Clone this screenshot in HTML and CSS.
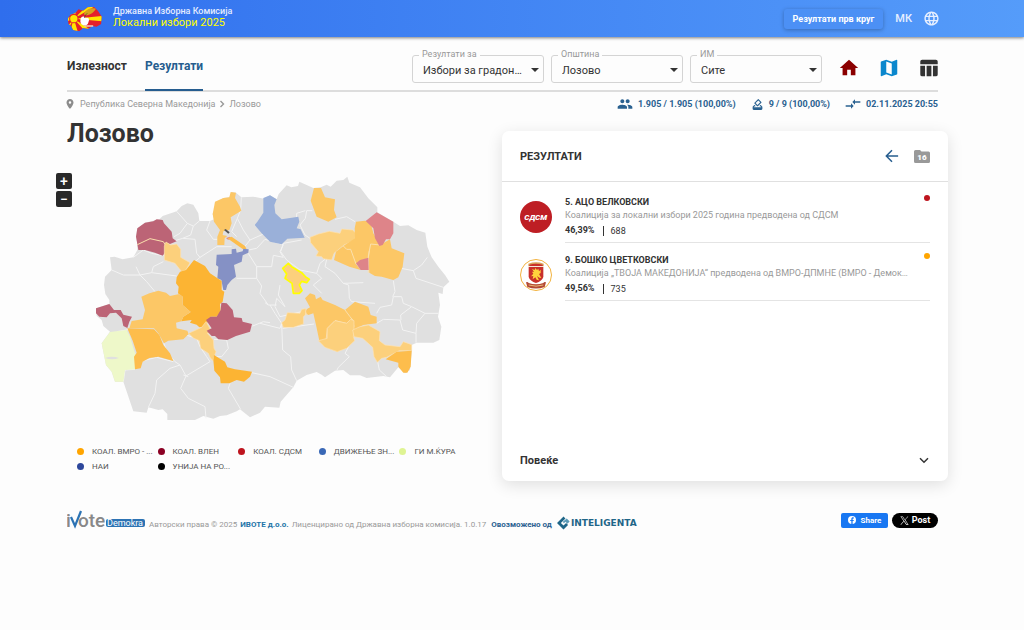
FILE: index.html
```html
<!DOCTYPE html>
<html lang="mk">
<head>
<meta charset="utf-8">
<meta name="viewport" content="width=device-width, initial-scale=1">
<title>Локални избори 2025</title>
<link rel="stylesheet" href="styles.css">
</head>
<body>
<header class="topbar">
  <a class="brand" href="#">
    <svg class="brand-logo" viewBox="0 0 104 78" aria-hidden="true">
      <defs><clipPath id="country"><path d="M2 38 10 26 24 22 34 10 48 14 62 4 80 2 92 14 104 32 102 54 88 62 76 60 64 68 48 66 36 76 18 72 12 60 4 54Z"/></clipPath></defs>
      <g clip-path="url(#country)">
        <path fill="#e5202b" d="M0 0h104v78H0z"/>
        <path fill="#ffe600" d="M20 38 0 30v16zM20 38 10 0h22zM20 38 8 78h24zM20 38 60 0h24zM20 38 104 30v16zM20 38 56 78h24zM20 38 0 4v12zM20 38 0 62v12z"/>
        <circle cx="20" cy="38" r="14" fill="#e5202b"/><circle cx="20" cy="38" r="11" fill="#ffe600"/>
      </g>
      <path fill="#d8a21c" d="M50 24C56 8 72 4 86 8 78 22 66 28 54 28z"/>
      <path fill="#fff" d="M40 40c2-12 12-10 16-4 8-4 12 4 8 12-2 10-10 12-16 10-6-2-10-8-8-18z"/>
      <path stroke="#f6e9cf" stroke-width="4" d="M52 60h26"/>
      <path stroke="#333" stroke-width="2" d="M52 36c0-6 4-10 8-14" fill="none"/>
    </svg>
    <span class="brand-text">
      <span class="brand-org">Државна Изборна Комисија</span>
      <span class="brand-name">Локални избори 2025</span>
    </span>
  </a>
  <div class="topbar-actions">
    <button class="round-button" type="button">Резултати прв круг</button>
    <button class="lang-button" type="button">МК
      <svg class="globe" viewBox="0 0 24 24" aria-hidden="true"><path fill="currentColor" d="M11.99 2C6.47 2 2 6.48 2 12s4.47 10 9.99 10C17.52 22 22 17.52 22 12S17.52 2 11.99 2zm6.93 6h-2.95c-.32-1.25-.78-2.45-1.38-3.56 1.84.63 3.37 1.91 4.33 3.56zM12 4.04c.83 1.2 1.48 2.53 1.91 3.96h-3.82c.43-1.43 1.08-2.76 1.91-3.96zM4.26 14C4.1 13.36 4 12.69 4 12s.1-1.36.26-2h3.38c-.08.66-.14 1.32-.14 2s.06 1.34.14 2H4.26zm.82 2h2.95c.32 1.25.78 2.45 1.38 3.56-1.84-.63-3.37-1.9-4.33-3.56zm2.95-8H5.08c.96-1.66 2.49-2.93 4.33-3.56C8.81 5.55 8.35 6.75 8.03 8zM12 19.96c-.83-1.2-1.48-2.53-1.91-3.96h3.82c-.43 1.43-1.08 2.76-1.91 3.96zM14.34 14H9.66c-.09-.66-.16-1.32-.16-2s.07-1.35.16-2h4.68c.09.65.16 1.32.16 2s-.07 1.34-.16 2zm.25 5.56c.6-1.11 1.06-2.31 1.38-3.56h2.95c-.96 1.65-2.49 2.93-4.33 3.56zM16.36 14c.08-.66.14-1.32.14-2s-.06-1.34-.14-2h3.38c.16.64.26 1.31.26 2s-.1 1.36-.26 2h-3.38z"/></svg>
    </button>
  </div>
</header>

<div class="page">
  <div class="toolbar">
    <nav class="tabs">
      <a class="tab" href="#turnout">Излезност</a>
      <a class="tab tab-active" href="#results">Резултати</a>
    </nav>
    <div class="filters">
      <div class="field"><label class="field-label" for="type">Резултати за</label><select class="field-select" id="type"><option>Избори за градоначалник</option></select></div>
      <div class="field"><label class="field-label" for="municipality">Општина</label><select class="field-select" id="municipality"><option>Лозово</option></select></div>
      <div class="field"><label class="field-label" for="station">ИМ</label><select class="field-select" id="station"><option>Сите</option></select></div>
    </div>
    <div class="views">
      <button class="view view-home" type="button" aria-label="Почетна"><svg viewBox="0 0 24 24"><path fill="currentColor" d="M10 20v-6h4v6h5v-8h3L12 3 2 12h3v8z"/></svg></button>
      <button class="view view-map" type="button" aria-label="Мапа"><svg viewBox="0 0 24 24"><path fill="currentColor" d="m20.5 3-.16.03L15 5.1 9 3 3.36 4.9c-.21.07-.36.25-.36.48V20.5c0 .28.22.5.5.5l.16-.03L9 18.9l6 2.1 5.64-1.9c.21-.07.36-.25.36-.48V3.500c0-.28-.22-.5-.5-.5zM15 19l-6-2.110V5l6 2.110V19z"/></svg></button>
      <button class="view view-table" type="button" aria-label="Табела"><svg viewBox="0 0 24 24"><path fill="currentColor" d="M2.500 9.500h5.200V21H4.500a2 2 0 0 1-2-2zM9.400 9.500h5.200V21H9.400zM16.300 9.500h5.200V19a2 2 0 0 1-2 2h-3.200zM4.500 3h15a2 2 0 0 1 2 2v3h-19V5a2 2 0 0 1 2-2z"/></svg></button>
    </div>
  </div>

  <div class="infobar">
    <nav class="crumbs" aria-label="Патека">
      <svg class="pin" viewBox="0 0 24 24" aria-hidden="true"><path fill="currentColor" d="M12 2C8.130 2 5 5.130 5 9c0 5.250 7 13 7 13s7-7.750 7-13c0-3.870-3.130-7-7-7zm0 9.500a2.500 2.500 0 1 1 0-5 2.500 2.500 0 0 1 0 5z"/></svg>
      <a class="crumb" href="#">Република Северна Македонија</a>
      <svg class="crumb-arrow" viewBox="0 0 6 8" aria-hidden="true"><path d="m1.500 1 3 3-3 3" fill="none" stroke="currentColor" stroke-width="1.400"/></svg>
      <a class="crumb" href="#">Лозово</a>
    </nav>
    <div class="stats">
      <span class="stat"><svg class="stat-icon stat-people" viewBox="0 0 24 24" aria-hidden="true"><path fill="currentColor" d="M16 11c1.660 0 2.990-1.340 2.990-3S17.660 5 16 5s-3 1.340-3 3 1.340 3 3 3zm-8 0c1.660 0 2.990-1.340 2.990-3S9.660 5 8 5 5 6.340 5 8s1.340 3 3 3zm0 2c-2.330 0-7 1.170-7 3.500V19h14v-2.500C15 14.170 10.330 13 8 13zm8 0c-.29 0-.62.02-.97.05 1.160.84 1.970 1.970 1.970 3.450V19h6v-2.500c0-2.330-4.670-3.500-7-3.500z"/></svg>1.905 / 1.905 (100,00%)</span>
      <span class="stat"><svg class="stat-icon" viewBox="0 0 24 24" aria-hidden="true"><path fill="currentColor" d="M18 13h-.68l-2 2h1.910L19 17H5l1.780-2h2.050l-2-2H6l-3 3v4c0 1.100.89 2 1.990 2H19a2 2 0 0 0 2-2v-4l-3-3zm-1-5.050-4.950 4.950-3.540-3.540 4.950-4.950L17 7.950zm-4.240-5.660L6.390 8.660a1 1 0 0 0 0 1.410l4.950 4.950c.39.39 1.020.39 1.410 0l6.360-6.360a1 1 0 0 0 0-1.410L14.160 2.300a.98.98 0 0 0-1.400-.01z"/></svg>9 / 9 (100,00%)</span>
      <span class="stat"><svg class="stat-icon stat-sync" viewBox="0 0 24 24" aria-hidden="true"><path fill="currentColor" d="M9.010 14H1v2h8.010v3L13 15l-3.990-4v3zm5.980-1v-3H23V8h-8.010V5L11 9l3.990 4z"/></svg>02.11.2025 20:55</span>
    </div>
  </div>

  <main class="content">
    <section class="map-panel">
      <h1 class="title">Лозово</h1>
      <div class="map-box">
        <div class="zoom">
          <button class="zoom-button" type="button">+</button>
          <button class="zoom-button" type="button">−</button>
        </div>
        <svg class="map" viewBox="0 0 1140 780" role="img" aria-label="Мапа на општини">
          <path class="land" d="M90 262 104 260 128 268 160 262 172 240 172 222 168 200 172 175 195 158 238 148 248 138 290 124 305 108 322 100 340 104 355 130 358 153 390 153 402 148 398 132 412 95 430 84 448 82 455 66 468 68 484 82 520 80 552 86 570 76 590 88 596 72 620 46 634 52 654 48 658 35 700 54 722 52 740 44 752 50 770 32 790 30 802 20 808 38 840 52 865 85 892 112 892 127 940 155 960 168 985 166 1010 180 1036 188 1042 230 1055 262 1075 290 1095 315 1108 335 1090 352 1088 372 1075 368 1080 405 1074 440 1084 470 1078 510 1060 518 1010 518 995 525 995 545 990 600 975 610 955 592 930 622 910 618 860 624 840 616 810 616 790 600 765 602 735 622 725 614 710 606 680 615 650 632 640 652 602 695 598 713 555 710 540 728 510 742 480 718 470 724 440 736 420 738 400 746 370 738 345 750 262 750 262 732 248 718 235 720 205 712 200 728 160 724 130 635 105 635 95 605 78 585 65 520 90 485 70 468 65 450 50 438 48 415 88 402 88 390 76 372 72 345 75 320 95 300Z"/>
          <g class="borders">
            <path d="M290 124 322 160 300 190 282 200M322 160 340 168 358 153M340 168 332 195 308 205 285 212M308 205 345 208 350 250 360 262 345 275M360 262 410 230 455 230M390 153 380 180 400 208 412 208M160 262 190 240 215 250 250 257M95 300 130 315 180 315 215 308 290 318M180 315 200 335 225 365M215 308 220 290 250 275M168 290 180 315M484 82 482 120 472 145 490 180 510 210 555 190 524 165M472 145 455 185 470 200M510 210 490 235M555 208 530 235 505 240M555 208 610 224 600 245 610 262 580 256 575 290 530 290 505 250M530 290 530 325 470 325M530 325 545 348 540 370 565 405 590 405M565 405 555 398"/>
            <path d="M676 145 660 165 675 195 690 205M676 145 680 122 697 122M676 122 650 130 650 145M765 148 800 140 825 155M602 245 610 220 665 210M602 245 620 270 660 300 710 310 720 280 735 268M740 268 735 290 765 310 790 340 850 338M710 310 725 325 700 345 725 370M790 340 806 345 808 385M963 295 1000 302 1025 285 1042 262M1000 302 1008 325 1090 352M940 332 945 365 938 380M600 345 595 375 615 410 590 385M590 385 585 410 600 440 665 425"/>
            <path d="M570 405 585 430 605 460 600 475 540 460M605 460 608 540 632 560 635 600 650 632M608 475 702 462M805 532 795 550 808 560 775 592 770 602M893 575 898 600 920 620M890 460 910 448 960 450 968 480 1008 490 1008 518M890 430 900 412 935 405 940 380 965 380 970 400 995 410 962 435 963 450M995 410 1035 430 1075 430M1035 430 1010 460 1008 490M808 385 815 395 885 400"/>
            <path d="M430 462 518 468 550 455 570 458M402 508 440 510 445 535 425 560 402 560M252 520 260 545 285 575 300 585 318 618 390 575M318 495 350 505 360 530 380 560 390 575M300 585 270 595 230 630 225 670 205 712M318 618 302 655 325 685 375 710 378 745M310 615 325 620M165 598 190 572 230 562 280 575M515 608 570 620 640 652M450 640 445 655 482 718M110 485 150 478M130 635 135 600 165 598"/>
          </g>
          <path class="c-vlen" d="M168 200 172 175 195 158 220 154 230 148 248 150 252 160 275 185 278 205 290 214 270 222 260 220 265 235 248 257 225 248 195 240 175 240 172 222Z"/>
          <path class="line" d="M172 224 210 206 250 215 256 225"/>
          <path class="c-y2" d="M405 95 430 84 448 82 452 66 468 68 465 84 480 110 484 122 452 142 455 160 448 180 430 184 428 195 442 198 434 205 433 225 412 225 412 200 420 180 402 155 398 132Z"/>
          <path class="c-y1" d="M253 228 258 216 272 225 290 222 302 238 302 262 330 278 318 300 305 305 285 280 253 270Z"/>
          <path class="c-black" d="m432 180 5-3 12 10-4 4z"/><path class="c-sdsm" d="m438 204 12-4 4 6-10 3z"/>
          <path class="c-y3" d="M442 205 455 200 495 228 500 238 488 237Z"/>
          <path class="c-nai" d="M410 254 455 252 455 238 468 236 470 248 488 244 490 236 506 238 505 248 488 256 485 275 462 285 468 320 455 330 442 345 438 360 430 360 424 330 412 325 415 290 408 285Z"/>
          <path class="c-top" d="M290 322 300 305 318 300 342 270 375 288 390 310 425 333 425 360 433 365 428 395 420 402 422 425 410 440 392 440 375 470 358 472 350 464 330 458 335 450 304 454 310 440 332 426 308 405 308 380 294 370 296 350 288 340Z"/>
          <path class="c-y2" d="M184 380 208 370 235 362 258 368 270 378 298 372 308 380 308 405 332 426 310 440 304 454 288 458 290 475 322 482 326 492 310 508 265 512 252 520 235 490 222 475 148 475 155 453 188 448 195 420Z"/>
          <path class="c-vlen" d="M48 415 88 402 102 420 122 420 130 434 156 440 148 455 142 474 130 468 125 445 108 428 90 430 80 442 58 440 48 430Z"/>
          <path class="c-kura" d="M90 486 140 480 150 500 162 540 170 560 165 598 135 600 130 635 105 635 95 605 78 585 65 520Z"/>
          <path class="land" d="M75 564q20-8 42 0-20 8-42 0"/>
          <path class="c-y3" d="M142 475 222 478 238 495 250 525 270 550 280 573 235 560 208 564 188 575 182 595 165 598 162 560 170 548 158 512Z"/>
          <path class="c-y1" d="M326 490 365 472 378 455 384 465 392 480 398 490 382 490 400 510 402 535 408 545 398 572 390 562 385 550 362 535 358 512 340 504Z"/>
          <path class="c-vlen" d="M378 450 392 440 410 440 422 420 424 398 440 400 458 420 462 442 485 444 488 455 516 462 510 485 468 498 442 510 415 508 405 498 395 498 380 482 395 475Z"/>
          <path class="c-top" d="M402 555 435 575 442 592 465 598 516 605 510 620 492 635 470 630 448 640 422 640 420 622 403 602 400 570Z"/>
          <path class="c-dvizh" d="M550 84 570 76 590 88 583 105 586 130 605 148 655 140 658 155 650 175 662 178 674 203 622 206 605 223 570 215 545 190 524 165 532 155 550 128Z"/>
          <path class="c-y2" d="M702 54 723 54 735 82 765 88 762 120 770 142 745 155 710 140 692 92Z"/>
          <path class="c-y1" d="M690 202 715 192 748 184 780 190 785 177 818 180 828 190 825 210 792 225 762 250 755 270 730 266 725 260 708 258 715 245 692 218Z"/>
          <path class="c-y2" d="M828 155 855 152 872 158 880 190 900 225 930 208 935 235 973 250 968 290 955 322 940 330 905 320 885 318 868 308 865 264 840 272 828 282 842 300 808 290 762 270 768 245 790 228 825 205 824 175Z"/>
          <path class="line" d="M790 228 800 238 812 238 828 282M865 308 865 258 872 222 900 225M868 242 865 264"/>
          <path class="c-sdsm" d="M857 153 890 127 940 155 940 190 930 208 918 208 908 225 898 228 885 205 880 175Z"/>
          <path class="c-sdsm" d="M828 280 840 270 865 263 866 300 842 300Z"/>
          <path class="c-lozovo" d="M608 295 625 280 635 290 665 308 678 322 688 328 680 338 665 334 658 345 666 362 658 370 640 370 636 340 615 325 620 312Z"/>
          <path class="c-y2" d="M675 385 690 370 705 375 708 388 722 380 728 390 765 405 795 420 825 395 865 410 872 435 890 440 890 460 850 465 822 480 820 512 772 545 735 532 718 512 708 465 700 430 685 435 675 428 680 418 690 412Z"/>
          <path class="line" d="M795 420 810 440 818 450 822 470M718 512 738 512 742 475 765 452 800 460 818 448M674 416 680 436"/>
          <path class="c-y1" d="M605 458 615 450 622 428 660 430 665 418 678 416 676 435 670 440 670 462 640 472 610 472Z"/>
          <path class="c-y1" d="M715 512 742 505 742 475 765 452 800 460 812 448 822 452 822 480 820 500 824 512 800 535 772 545 735 532Z"/>
          <path class="c-y1" d="M818 480 840 470 865 465 900 485 898 512 915 525 960 530 970 515 995 524 995 542 958 542 920 562 905 565 892 577 882 560 878 532 848 505 822 500Z"/>
          <path class="c-y3" d="M917 568 950 545 995 542 992 590 982 608 970 608 955 590 955 578Z"/>
        </svg>
      </div>
      <ul class="legend">
        <li class="legend-item"><i class="dot dot-orange"></i><span class="legend-name">КОАЛ. ВМРО - ...</span></li>
        <li class="legend-item"><i class="dot dot-wine"></i><span class="legend-name">КОАЛ. ВЛЕН</span></li>
        <li class="legend-item"><i class="dot dot-red"></i><span class="legend-name">КОАЛ. СДСМ</span></li>
        <li class="legend-item"><i class="dot dot-blue"></i><span class="legend-name">ДВИЖЕЊЕ ЗН...</span></li>
        <li class="legend-item"><i class="dot dot-lime"></i><span class="legend-name">ГИ М.ЌУРА</span></li>
        <li class="legend-item"><i class="dot dot-navy"></i><span class="legend-name">НАИ</span></li>
        <li class="legend-item"><i class="dot dot-black"></i><span class="legend-name">УНИЈА НА РО...</span></li>
      </ul>
    </section>

    <section class="card">
      <div class="card-head">
        <h2 class="card-title">РЕЗУЛТАТИ</h2>
        <div class="card-tools">
          <button class="tool tool-back" type="button" aria-label="Назад"><svg viewBox="0 0 16 16"><path d="M15 8H2M8 1.500 1.500 8 8 14.500" fill="none" stroke="currentColor" stroke-width="1.700"/></svg></button>
          <button class="tool tool-folder" type="button" aria-label="16"><svg viewBox="0 0 16 13"><path fill="currentColor" d="M1.500 0H6l1.500 1.500h7A1.500 1.500 0 0 1 16 3v8.500a1.500 1.500 0 0 1-1.500 1.500h-13A1.500 1.500 0 0 1 0 11.500v-10A1.500 1.500 0 0 1 1.500 0z"/><text class="folder-text" x="8" y="10">16</text></svg></button>
        </div>
      </div>
      <ul class="results">
        <li class="result">
          <svg class="party" viewBox="0 0 96 96" aria-hidden="true"><circle cx="48" cy="48" r="48" fill="#be1e24"/><text class="sdsm-text" x="47" y="58">СДСМ</text></svg>
          <div class="result-body">
            <h3 class="result-name">5. АЦО ВЕЛКОВСКИ</h3>
            <p class="result-party">Коалиција за локални избори 2025 година предводена од СДСМ</p>
            <p class="result-votes"><b class="percent">46,39%</b><span class="votes">688</span></p>
            <i class="dot dot-red result-dot"></i>
          </div>
        </li>
        <li class="result">
          <svg class="party" viewBox="0 0 96 96" aria-hidden="true"><circle cx="48" cy="48" r="46.500" fill="#fff" stroke="#f2b23e" stroke-width="3"/><path fill="#d9a35c" d="M25 14q23-8 46 0v8H25z"/><path fill="#c9302b" d="M28 17q20-5 40 0v4H28zM26 24h44v30q-4 12-22 18-18-6-22-18z"/><path fill="#ffd23c" d="m46 27 5 6 4-4 2 8 5-5v10l-5 3 7 12-6-1-7-5 6 13-7-2-4-7-8 6 2-10-7 1 7-8-4-6 6 1-6-9 8 3z"/><path fill="#b44a35" d="M18 70q5-3 8 2 22 8 44 0 3-5 8-2l-4 14q-26 9-52 0z"/><path d="M26 78q22 7 44 0" fill="none" stroke="#e9b878" stroke-width="3"/></svg>
          <div class="result-body">
            <h3 class="result-name">9. БОШКО ЦВЕТКОВСКИ</h3>
            <p class="result-party">Коалиција „ТВОЈА МАКЕДОНИЈА“ предводена од ВМРО-ДПМНЕ (ВМРО - Демократска партија)</p>
            <p class="result-votes"><b class="percent">49,56%</b><span class="votes">735</span></p>
            <i class="dot dot-orange result-dot"></i>
          </div>
        </li>
      </ul>
      <button class="more" type="button">Повеќе<svg class="more-icon" viewBox="0 0 10 7" aria-hidden="true"><path d="m1 1.200 4 4 4-4" fill="none" stroke="currentColor" stroke-width="1.500"/></svg></button>
    </section>
  </main>

  <footer class="footer">
    <svg class="ivote" viewBox="0 0 79 20" role="img" aria-label="iVote Demokra"><text class="ivote-text" x="-1" y="17">i</text><path d="m4 7 4 9 6-15" fill="none" stroke="#2c73b4" stroke-width="2.200"/><text class="ivote-text" x="11" y="17">ote</text><rect x="39" y="9" width="39" height="8" rx="2" fill="#2c73b4"/><text class="demokra-text" x="58" y="16">Demokra</text></svg>
    <span class="copy">Авторски права © 2025</span>
    <a class="copy-link" href="#">ИВОТЕ д.о.о.</a>
    <span class="copy">Лиценцирано од Државна изборна комисија. 1.0.17</span>
    <span class="powered">Овозможено од</span>
    <a class="inteligenta" href="#"><svg class="int-mark" viewBox="0 0 40 42" aria-hidden="true"><path fill="#1f6688" d="M0 21 20 1l6 6-14 14 8 8 8-8 6 6-14 14z"/><path fill="#5b9bb8" d="m18 17 12-10 9 9-7 7-6-6-5 5z"/></svg>INTELIGENTA</a>
    <div class="share">
      <button class="share-fb" type="button"><svg class="fb-icon" viewBox="0 0 18 18" aria-hidden="true"><circle cx="9" cy="9" r="9" fill="#fff"/><path fill="#1877f2" d="M7.500 18v-6.500H5V9h2.500V7c0-2.500 1.500-4 3.800-4l2 .2v2.200H12c-1.300 0-1.600.8-1.600 1.600v2h2.700l-.5 2.500h-2.200V18z"/></svg>Share</button>
      <button class="share-x" type="button"><svg class="x-icon" viewBox="0 0 24 24" aria-hidden="true"><path fill="currentColor" d="M14.095 10.316 22.286 1h-1.940l-7.115 8.088L7.551 1H1l8.590 12.231L1 23h1.940l7.510-8.543L16.450 23H23zM11.436 13.338l-.871-1.219L3.640 2.432h2.980l5.590 7.821.87 1.219 7.265 10.166h-2.982z"/></svg>Post</button>
    </div>
  </footer>
</div>
</body>
</html>
```
FILE: styles.css
```css
* { box-sizing: border-box; }

body {
  margin: 0;
  background: #fdfdfd;
  color: #333;
  font-family: Roboto, "Liberation Sans", sans-serif;
  font-size: 10px;
}

button {
  padding: 0;
  border: 0;
  background: none;
  color: inherit;
  font: inherit;
  cursor: pointer;
}

a { color: inherit; text-decoration: none; }
ul { margin: 0; padding: 0; list-style: none; }
h1, h2, h3, p { margin: 0; }
svg { display: block; flex: none; }

/* Top bar */
.topbar {
  display: flex;
  align-items: center;
  justify-content: space-between;
  height: 37px;
  padding: 0 86px 0 67px;
  background: linear-gradient(90deg, #2f6eed, #559cfa);
  box-shadow: 0 1px 3px rgba(0, 0, 0, .5);
}
.brand { display: flex; align-items: center; gap: 11px; }
.brand-logo { width: 35px; height: 26px; }
.brand-text { display: flex; flex-direction: column; padding-bottom: 3px; }
.brand-org { color: #e4ecff; font-size: 9px; font-weight: 500; line-height: 11px; }
.brand-name { color: #ff0; font-size: 11px; line-height: 12px; }
.topbar-actions { display: flex; align-items: center; gap: 12px; margin-right: -2px; }
.round-button {
  height: 20px;
  padding: 0 9px;
  border-radius: 3px;
  background: #4c90f5;
  box-shadow: 0 1px 4px rgba(0, 0, 0, .28);
  color: #fff;
  font-size: 9px;
  font-weight: 700;
}
.lang-button { display: flex; align-items: center; gap: 11px; color: #e6efff; font-size: 11px; font-weight: 500; }
.globe { width: 17px; height: 17px; }

.page { padding: 0 86px 0 67px; }

/* Tabs and filters */
.toolbar {
  display: flex;
  align-items: stretch;
  height: 55px;
  border-bottom: 2px solid #ddd;
}
.tabs { display: flex; gap: 18px; flex: 1; }
.tab {
  height: 54px;
  padding-top: 22px;
  font-size: 12px;
  font-weight: 700;
  line-height: 15px;
}
.tab-active { border-bottom: 2px solid #265d8f; color: #265d8f; }
.filters { display: flex; gap: 7px; padding-top: 18px; }
.field { position: relative; width: 132px; }
.field-label {
  position: absolute;
  top: -7px;
  left: 7px;
  padding: 0 3px;
  background: #fdfdfd;
  color: #999;
  font-size: 9px;
  line-height: 12px;
}
.field-select {
  width: 100%;
  height: 28px;
  padding: 2px 18px 0 10px;
  border: 1px solid #d4d4d4;
  border-radius: 3px;
  appearance: none;
  background: linear-gradient(#fdfdfd, #fdfdfd);
  color: #333;
  font: 11px Roboto, sans-serif;
  text-overflow: ellipsis;
}
.field::after {
  content: "";
  position: absolute;
  top: 13px;
  right: 5px;
  border: 4px solid transparent;
  border-top-color: #333;
  border-bottom: 0;
  pointer-events: none;
}
.views { display: flex; gap: 18px; margin-right: -2px; padding: 20px 0 0 16px; }
.view { width: 22px; height: 22px; }
.view-home { color: #8b0000; }
.view-map { color: #0a87cd; }
.view-table { color: #333; }

/* Location and counters */
.infobar { display: flex; align-items: center; justify-content: space-between; height: 24px; }
.crumbs { display: flex; align-items: center; gap: 4px; color: #999; font-size: 9px; }
.pin { width: 12px; height: 12px; margin-left: -3px; color: #8c8c8c; }
.crumb-arrow { width: 6px; height: 8px; }
.stats { display: flex; gap: 15px; color: #2a6190; font-size: 9px; font-weight: 700; }
.stat { display: flex; align-items: center; gap: 5px; }
.stat-icon { width: 13px; height: 13px; }
.stat-people, .stat-sync { width: 16px; height: 16px; }

/* Main area */
.content { display: grid; grid-template-columns: 425px minmax(0, 1fr); column-gap: 10px; margin-right: -10px; }
.title { font-size: 25px; font-weight: 700; line-height: 36px; }
.map-box { position: relative; padding: 18px 32px 0 13px; }
.map { width: 100%; height: auto; }
.zoom { position: absolute; top: 21px; left: -11px; display: grid; gap: 2px; }
.zoom-button {
  width: 16px;
  height: 16px;
  border-radius: 2px;
  background: #292929;
  color: #fff;
  font-size: 14px;
  font-weight: 500;
  line-height: 14px;
}
.land { fill: #e0e0e0; }
.borders path, .line { fill: none; stroke: #f3f3f3; stroke-width: 3; stroke-linejoin: round; }
.line { stroke: #fbe0ad; }
.c-vlen { fill: #bc6476; }
.c-sdsm { fill: #de8489; }
.c-y1 { fill: #fcd07c; stroke: #fde3b4; stroke-width: 2; }
.c-y2 { fill: #fcc766; }
.c-y3 { fill: #fdbd4c; }
.c-top { fill: #fcb433; }
.c-nai { fill: #8591c5; }
.c-dvizh { fill: #9ab0d9; }
.c-kura { fill: #eef8c9; }
.c-black { fill: #555; }
.c-lozovo { fill: #fcd07c; stroke: #ff0; stroke-width: 5; stroke-linejoin: round; }

.legend {
  display: grid;
  grid-template-columns: repeat(5, 1fr);
  width: 403px;
  margin: 14px 0 0 10px;
}
.legend-item { display: flex; align-items: center; gap: 8px; height: 15px; min-width: 0; }
.legend-name { color: #555; font-size: 8px; white-space: nowrap; }
.dot { flex: none; width: 7px; height: 7px; border-radius: 50%; }
.dot-orange { background: #ffa500; }
.dot-wine { background: #8b0023; }
.dot-red { background: #be141e; }
.dot-blue { background: #3a68b6; }
.dot-lime { background: #dff493; }
.dot-navy { background: #2d479b; }
.dot-black { background: #000; }

/* Results card */
.card {
  display: flex;
  flex-direction: column;
  align-self: start;
  min-height: 350px;
  margin-top: 15px;
  border-radius: 7px;
  background: #fff;
  box-shadow: 0 4px 16px rgba(0, 0, 0, .12);
}
.card-head {
  display: flex;
  align-items: center;
  justify-content: space-between;
  height: 51px;
  padding: 0 18px;
  border-bottom: 1px solid #e0e0e0;
}
.card-title { font-size: 11px; font-weight: 700; }
.card-tools { display: flex; align-items: center; gap: 15px; }
.tool-back { width: 14px; color: #265d8f; }
.tool-folder { width: 16px; color: #999; }
.folder-text { fill: #fff; font-size: 8px; font-weight: 900; text-anchor: middle; }
.results { flex: 1; padding: 3px 18px 0; }
.result { display: flex; align-items: center; gap: 13px; height: 58px; padding-top: 2px; }
.party { width: 32px; height: 32px; margin-bottom: -3px; }
.sdsm-text { fill: #fff; font-size: 24px; font-style: italic; font-weight: 900; text-anchor: middle; }
.result-body {
  position: relative;
  align-self: stretch;
  flex: 1;
  min-width: 0;
  padding: 9px 20px 0 0;
  border-bottom: 1px solid #e4e4e4;
}
.result-name { font-size: 9px; font-weight: 700; line-height: 13px; }
.result-party { overflow: hidden; color: #999; font-size: 9px; line-height: 12px; white-space: nowrap; text-overflow: ellipsis; }
.result-votes { display: flex; align-items: center; padding-top: 3px; font-size: 9px; line-height: 13px; }
.percent { padding-right: 8px; }
.votes { padding-left: 7px; border-left: 1px solid #333; line-height: 10px; }
.result-dot { position: absolute; top: 8px; right: 0; width: 6px; height: 6px; }
.more {
  display: flex;
  align-items: center;
  justify-content: space-between;
  height: 42px;
  padding: 0 19px 0 18px;
  font-size: 11px;
  font-weight: 700;
}
.more-icon { width: 10px; height: 7px; }

/* Footer */
.footer { display: flex; align-items: center; gap: 3px; padding-top: 29px; font-size: 8px; white-space: nowrap; }
.ivote { width: 79px; height: 20px; }
.ivote-text { fill: #888; font-size: 19px; font-weight: 500; }
.demokra-text { fill: #fff; font-size: 9px; text-anchor: middle; }
.copy { padding-top: 8px; color: #999; }
.copy-link { padding-top: 8px; color: #2374a8; font-weight: 700; }
.powered { padding: 8px 0 0 2px; color: #2a6190; font-weight: 700; }
.inteligenta { display: flex; align-items: center; gap: 1px; padding: 5px 0 0 2px; color: #1f6688; font-family: "DejaVu Sans", sans-serif; font-size: 9px; font-weight: 700; }
.int-mark { width: 13px; height: 14px; }
.share { display: flex; gap: 4px; margin-left: auto; }
.share-fb, .share-x { display: flex; align-items: center; justify-content: center; height: 15px; color: #fff; font-weight: 700; }
.share-fb { gap: 5px; width: 47px; border-radius: 2px; background: #1877f2; font-size: 8px; }
.fb-icon { width: 8px; height: 8px; }
.share-x { gap: 3px; width: 46px; border-radius: 8px; background: #000; font-size: 9px; }
.x-icon { width: 9px; height: 9px; }
```
